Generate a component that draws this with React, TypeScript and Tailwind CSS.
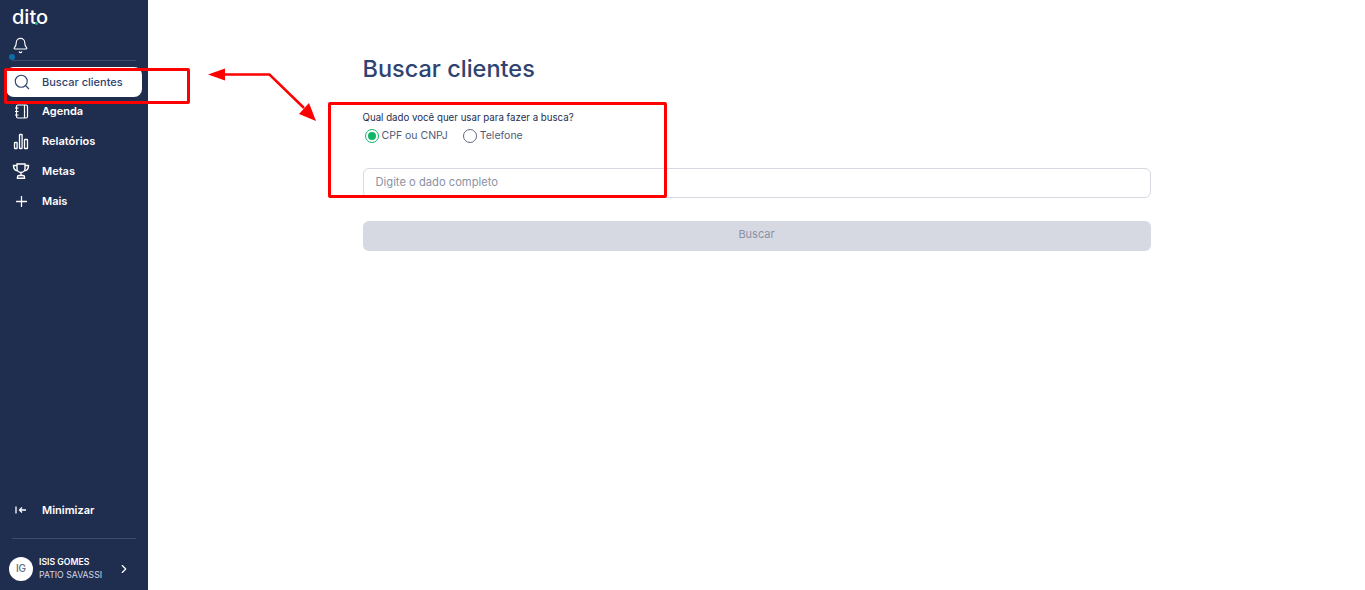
import { Bell, Search, ChevronRight, Plus } from "lucide-react";

const font = { fontFamily: "Inter, 'Noto Sans', sans-serif" };

function AgendaIcon() {
  return (
    <svg width="18" height="18" viewBox="0 0 18 18" fill="none" stroke="white" strokeWidth="1.2">
      <rect x="4.500" y="3" width="11" height="13" rx="1.500" />
      <path d="M12.500 3v13M3 6h3.500M3 9.500h3.500M3 13h3.500" />
    </svg>
  );
}

function ChartIcon() {
  return (
    <svg width="18" height="18" viewBox="0 0 18 18" fill="none" stroke="white" strokeWidth="1.3">
      <rect x="2.500" y="10.500" width="2.600" height="6" rx="0.600" />
      <rect x="7.500" y="2.500" width="2.600" height="14" rx="0.600" />
      <rect x="12.500" y="7.500" width="3" height="9" rx="0.600" />
    </svg>
  );
}

function TrophyIcon() {
  return (
    <svg width="18" height="18" viewBox="0 0 18 18" fill="none" stroke="white" strokeWidth="1.4">
      <path d="M5 2h8v4.500a4 4 0 0 1-8 0V2Z" />
      <path d="M5 3.500H1.500C1.500 7 3 8.500 5.500 8.800M13 3.500h3.500c0 3.500-1.500 5-4 5.300" />
      <path d="M9 10.500v3M5.500 16.200h7v-1.200a1.500 1.500 0 0 0-1.500-1.500H7a1.500 1.500 0 0 0-1.500 1.500v1.200Z" />
    </svg>
  );
}

function MinimizeIcon() {
  return (
    <svg width="12" height="10" viewBox="0 0 12 10" fill="none" stroke="white" strokeWidth="1.3">
      <path d="M1 1.500v7M11 5H4.500M7 2.500 4.500 5 7 7.500" />
    </svg>
  );
}

function NavRow({ icon, label }: { icon: React.ReactNode; label: string }) {
  return (
    <div className="flex h-[30px] items-center pl-3">
      <span className="flex w-[18px] justify-center">{icon}</span>
      <span className="ml-3 text-[11px] font-semibold text-white">{label}</span>
    </div>
  );
}

function Sidebar() {
  return (
    <aside className="flex h-[590px] w-[148px] shrink-0 flex-col bg-[#1f2d4f]">
      <div className="px-3 pt-[7px]">
        <div className="relative h-[20px] text-[20px] leading-[20px] font-medium text-white">
          dito
          <span className="absolute top-[15px] left-[23px] h-[3px] w-[3px] rounded-full bg-[#10b467]" />
        </div>
        <div className="relative mt-[10px] h-[23px]">
          <Bell size={17} strokeWidth={1.6} className="text-white" />
          <span className="absolute top-[17px] left-[-3px] h-[6px] w-[6px] rounded-full bg-[#0f6ea8]" />
        </div>
        <div className="h-px bg-[#3a4a70]" />
      </div>

      <div className="mt-[6px] ml-[6px] flex h-[30px] w-[136px] items-center rounded-lg bg-white pl-[7px]">
        <Search size={18} strokeWidth={1.5} className="text-[#2f4370]" />
        <span className="ml-[11px] text-[11px] font-medium text-[#2f4370]">Buscar clientes</span>
      </div>

      <div className="mt-[-1px]">
        <NavRow icon={<AgendaIcon />} label="Agenda" />
        <NavRow icon={<ChartIcon />} label="Relatórios" />
        <NavRow icon={<TrophyIcon />} label="Metas" />
        <NavRow icon={<Plus size={17} strokeWidth={1.8} className="text-white" />} label="Mais" />
      </div>

      <div className="mt-auto">
        <NavRow icon={<MinimizeIcon />} label="Minimizar" />
        <div className="mx-3 mt-[13px] h-px bg-[#3a4a70]" />
        <div className="flex h-[51px] items-center pt-[8px] pl-[9px]">
          <div className="flex h-6 w-6 items-center justify-center rounded-full bg-white text-[10px] font-medium text-[#5b6782]">
            IG
          </div>
          <div className="ml-[6px] w-[74px] leading-[13px] whitespace-nowrap">
            <div className="text-[8.700px] font-semibold text-white">ISIS GOMES</div>
            <div className="text-[8.700px] text-[#d5d9e3]">PATIO SAVASSI</div>
          </div>
          <ChevronRight size={14} strokeWidth={2} className="ml-[4px] text-white" />
        </div>
      </div>
    </aside>
  );
}

function Radio({ checked, label }: { checked?: boolean; label: string }) {
  return (
    <div className="flex items-center gap-[3px]">
      <span
        className={`flex h-[14px] w-[14px] items-center justify-center rounded-full border ${
          checked ? "border-[#10b467]" : "border-[#5f6b85]"
        } bg-white`}
      >
        {checked && <span className="h-[8px] w-[8px] rounded-full bg-[#10b467]" />}
      </span>
      <span className="text-[10.500px] text-[#4f5b76]">{label}</span>
    </div>
  );
}

// red marks drawn over the screenshot
function Annotations() {
  return (
    <div className="pointer-events-none absolute inset-0">
      <div className="absolute top-[68px] left-[4px] h-[36px] w-[186px] rounded-[2px] border-[3px] border-[#fe0000]" />
      <div className="absolute top-[102px] left-[328px] h-[96px] w-[339px] rounded-[2px] border-[3px] border-[#fe0000]" />
      <svg className="absolute top-[60px] left-[200px]" width="130" height="70" viewBox="0 0 130 70" fill="none">
        <path d="M20 14.500h49.500L104 48" stroke="#fe0000" strokeWidth="2.500" />
        <path d="M8 14.500 25 8.500v12Z" fill="#fe0000" />
        <path d="M116 61 99 54l10-11Z" fill="#fe0000" />
      </svg>
    </div>
  );
}

export default function App() {
  return (
    <div className="relative flex h-[590px] w-full overflow-hidden bg-white" style={font}>
      <Sidebar />
      <main className="flex-1">
        <div className="mx-auto w-[788px] pt-[53px]">
          <h1 className="text-[23.500px] leading-[32px] font-medium text-[#2f4370]">Buscar clientes</h1>
          <p className="mt-[27px] text-[9.700px] leading-[12px] text-[#1f2d4f]">Qual dado você quer usar para fazer a busca?</p>
          <div className="mt-[5px] ml-[2px] flex h-[14px] items-center gap-[15px]">
            <Radio checked label="CPF ou CNPJ" />
            <Radio label="Telefone" />
          </div>
          <div className="mt-[25px] flex h-[30px] items-center rounded-md border border-[#d6d9e2] px-3 pb-[1px] text-[11.200px] text-[#8a92a3]">
            Digite o dado completo
          </div>
          <div className="mt-[23px] flex h-[30px] items-center justify-center rounded-md bg-[#d6d9e2] pb-[3px] text-[11px] text-[#8a92a3]">
            Buscar
          </div>
        </div>
      </main>
      <Annotations />
    </div>
  );
}
